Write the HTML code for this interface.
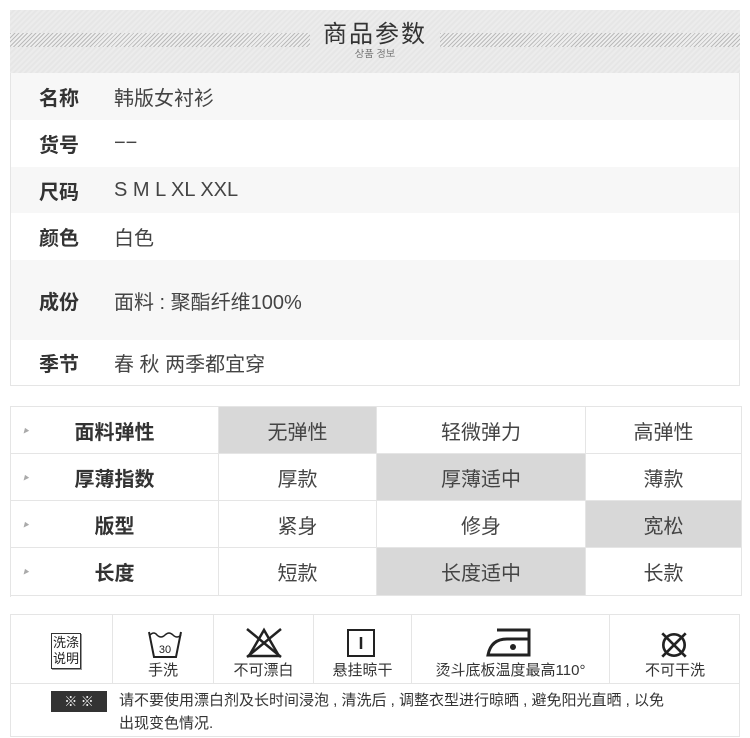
<!DOCTYPE html>
<html><head><meta charset="utf-8"><style>
*{margin:0;padding:0;box-sizing:border-box}
body{width:750px;height:738px;background:#fff;position:relative;overflow:hidden;font-family:"Liberation Sans","Noto Sans CJK SC",sans-serif;color:#444}
.a{position:absolute}
.hdr{left:10px;top:10px;width:730px;height:63px;background:repeating-linear-gradient(135deg,#ececec 0 2px,#e6e6e6 2px 4px)}
.stripe{top:33px;height:14px;background:repeating-linear-gradient(135deg,#bbb 0 1px,#eee 1px 3px)}
.t1{left:0;width:750px;top:20px;line-height:30px;text-align:center;font-size:24px;color:#333;letter-spacing:2px}
.t2{left:0;width:750px;top:49px;line-height:12px;text-align:center;font-size:10px;color:#666;font-family:"Liberation Sans","NanumGothic",sans-serif}
.p{left:10px;width:730px;border:1px solid #e5e5e5;border-top:none}
.row{position:absolute;left:0;width:728px;display:flex;align-items:center;font-size:20px}
.row b{position:absolute;left:28px;font-weight:bold;color:#333}
.row span{position:absolute;left:103px;color:#444}
.c{position:absolute;display:flex;align-items:center;justify-content:center;font-size:20px;color:#444;border-right:1px solid #e5e5e5;border-bottom:1px solid #e5e5e5}
.g{background:#d8d8d8}
.lab{font-weight:bold;color:#333}
.tri{position:absolute;left:12px;font-size:6px;color:#aaa}
.w{position:absolute;top:614px;height:69px;border-right:1px solid #e5e5e5;text-align:center;font-size:15px;color:#333}
.w .l{position:absolute;left:0;right:0;top:45px}
</style></head><body>
<div class="a hdr"></div>
<div class="a stripe" style="left:10px;width:300px"></div>
<div class="a stripe" style="left:440px;width:300px"></div>
<div class="a t1">商品参数</div>
<div class="a t2">상품 정보</div>

<div class="a p" style="top:73px;height:313px">
<div class="row" style="top:0;height:47px;background:#f7f7f7"><b>名称</b><span>韩版女衬衫</span></div>
<div class="row" style="top:47px;height:47px"><b>货号</b><span>−−</span></div>
<div class="row" style="top:94px;height:46px;background:#f7f7f7"><b>尺码</b><span>S M L XL XXL</span></div>
<div class="row" style="top:140px;height:47px"><b>颜色</b><span>白色</span></div>
<div class="row" style="top:187px;height:80px;background:#f7f7f7"><b>成份</b><span>面料 : 聚酯纤维100%</span></div>
<div class="row" style="top:267px;height:45px"><b>季节</b><span>春 秋 两季都宜穿</span></div>
</div>

<div class="a" style="left:10px;top:406px;width:732px;height:191px;border:1px solid #e5e5e5;border-right:none;border-bottom:none">
<div class="c lab" style="left:0;top:0;width:208px;height:47px"><i class="tri">▶</i>面料弹性</div>
<div class="c g" style="left:208px;top:0;width:158px;height:47px">无弹性</div>
<div class="c" style="left:366px;top:0;width:209px;height:47px">轻微弹力</div>
<div class="c" style="left:575px;top:0;width:156px;height:47px">高弹性</div>
<div class="c lab" style="left:0;top:47px;width:208px;height:47px"><i class="tri">▶</i>厚薄指数</div>
<div class="c" style="left:208px;top:47px;width:158px;height:47px">厚款</div>
<div class="c g" style="left:366px;top:47px;width:209px;height:47px">厚薄适中</div>
<div class="c" style="left:575px;top:47px;width:156px;height:47px">薄款</div>
<div class="c lab" style="left:0;top:94px;width:208px;height:47px"><i class="tri">▶</i>版型</div>
<div class="c" style="left:208px;top:94px;width:158px;height:47px">紧身</div>
<div class="c" style="left:366px;top:94px;width:209px;height:47px">修身</div>
<div class="c g" style="left:575px;top:94px;width:156px;height:47px">宽松</div>
<div class="c lab" style="left:0;top:141px;width:208px;height:48px"><i class="tri">▶</i>长度</div>
<div class="c" style="left:208px;top:141px;width:158px;height:48px">短款</div>
<div class="c g" style="left:366px;top:141px;width:209px;height:48px">长度适中</div>
<div class="c" style="left:575px;top:141px;width:156px;height:48px">长款</div>
</div>

<div class="a" style="left:10px;top:614px;width:730px;height:123px;border:1px solid #e5e5e5"></div>
<div class="a" style="left:10px;top:683px;width:730px;border-top:1px solid #e5e5e5"></div>
<div class="w" style="left:10px;width:103px"><div class="a" style="left:41px;top:19px;width:30px;height:36px;border:1px solid #333;box-shadow:1px 1px 0 #999;font-size:13px;line-height:16px;padding-top:1px;color:#222">洗涤<br>说明</div></div>
<div class="w" style="left:113px;width:101px"><svg class="a" style="left:33px;top:14px" width="38" height="32" viewBox="0 0 36 32" fill="none" stroke="#222" stroke-width="2"><path d="M2 4 L7 29 H29 L34 4"/><path d="M3 7 q4 -4 7 0 q4 4 8 0 q4 -4 8 0 q4 4 8 0" stroke-width="1.5"/><text x="18" y="25" font-size="11" text-anchor="middle" fill="#222" stroke="none" font-family="Liberation Sans">30</text></svg><div class="l">手洗</div></div>
<div class="w" style="left:214px;width:100px"><svg class="a" style="left:29px;top:12px" width="42" height="34" viewBox="0 0 42 34" fill="none" stroke="#222" stroke-width="2.5"><path d="M21 4 L36 30 H6 Z"/><path d="M4 3 L38 31 M38 3 L4 31"/></svg><div class="l">不可漂白</div></div>
<div class="w" style="left:314px;width:98px"><svg class="a" style="left:32px;top:14px" width="32" height="32" viewBox="0 0 32 32" fill="none" stroke="#222" stroke-width="2"><rect x="2" y="2" width="26" height="26"/><path d="M15 9 V21" stroke-width="2.5"/></svg><div class="l">悬挂晾干</div></div>
<div class="w" style="left:412px;width:198px"><svg class="a" style="left:73px;top:13px" width="50" height="32" viewBox="0 0 50 32" fill="none" stroke="#222" stroke-width="3"><path d="M12 3 H44 V28 H3 Q6 12 22 12 H44"/><circle cx="28" cy="20" r="3" fill="#222" stroke="none"/></svg><div class="l">烫斗底板温度最高110°</div></div>
<div class="w" style="left:610px;width:130px;border-right:none"><svg class="a" style="left:48px;top:15px" width="32" height="32" viewBox="0 0 30 30" fill="none" stroke="#222" stroke-width="2.5"><circle cx="15" cy="15" r="10"/><path d="M4 4 L26 26 M26 4 L4 26"/></svg><div class="l">不可干洗</div></div>
<div class="a" style="left:51px;top:691px;width:56px;height:21px;background:#333;color:#fff;font-size:13px;text-align:center;line-height:21px">※ ※</div>
<div class="a" style="left:119px;top:689px;width:620px;font-size:15px;line-height:23px;color:#333;white-space:nowrap">请不要使用漂白剂及长时间浸泡 , 清洗后 , 调整衣型进行晾晒 , 避免阳光直晒 , 以免<br>出现变色情况.</div>
</body></html>
